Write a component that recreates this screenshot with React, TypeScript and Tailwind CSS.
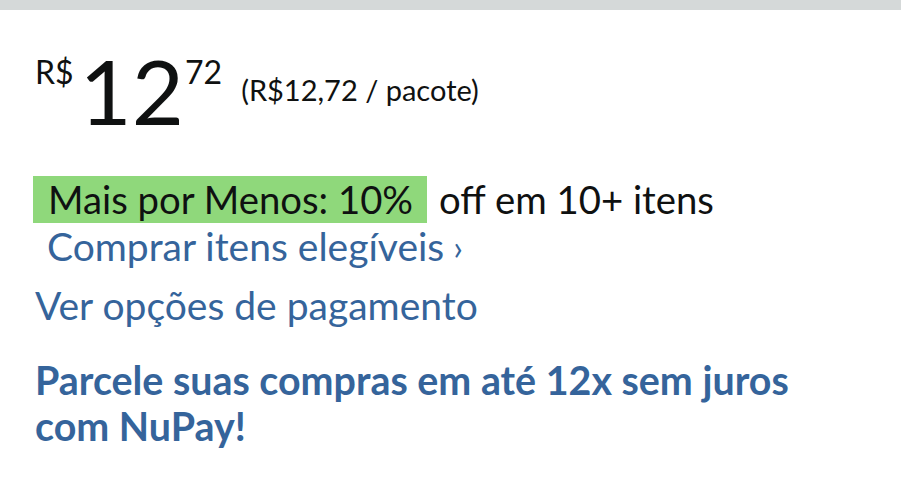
import React from 'react';

const App: React.FC = () => {
  return (
    <div className="w-[901px] h-[500px] bg-white overflow-hidden" style={{ fontFamily: 'Lato, "Noto Sans", sans-serif' }}>
      <div className="h-[10px] bg-[#d5d9d9]" />
      <div className="pl-[35px] pt-[40px]">
        {/* Price */}
        <div className="flex items-start text-[#0f1111]">
          <span className="text-[32px] leading-none mt-[6px]">R$</span>
          <span className="text-[90px] leading-none ml-[6px] -mt-[5px]">12</span>
          <span className="text-[32px] leading-none mt-[6px] ml-[1px]">72</span>
          <span className="text-[29px] leading-none mt-[25px] ml-[19px]">(R$12,72 / pacote)</span>
        </div>

        {/* Deal */}
        <div className="mt-[41px] flex items-center text-[38.3px] leading-[47px] text-[#0f1111]">
          <span className="bg-[#8fd87b] pl-[15px] pr-[14px] -ml-[2px]">Mais por Menos: 10%</span>
          <span className="ml-[12px]">off em 10+ itens</span>
        </div>
        <div className="flex items-center text-[39px] leading-[47px] text-[#35649b] ml-[12px]">
          <span>Comprar itens elegíveis</span>
          <span className="text-[34px] ml-[9px] leading-none">›</span>
        </div>

        <div className="mt-[12px] text-[39px] leading-[47px] text-[#35649b]">Ver opções de pagamento</div>

        <div className="mt-[28px] text-[39.4px] leading-[46px] font-bold text-[#35649b] w-[800px]">
          Parcele suas compras em até 12x sem juros<br />com NuPay!
        </div>
      </div>
    </div>
  );
};

export default App;
